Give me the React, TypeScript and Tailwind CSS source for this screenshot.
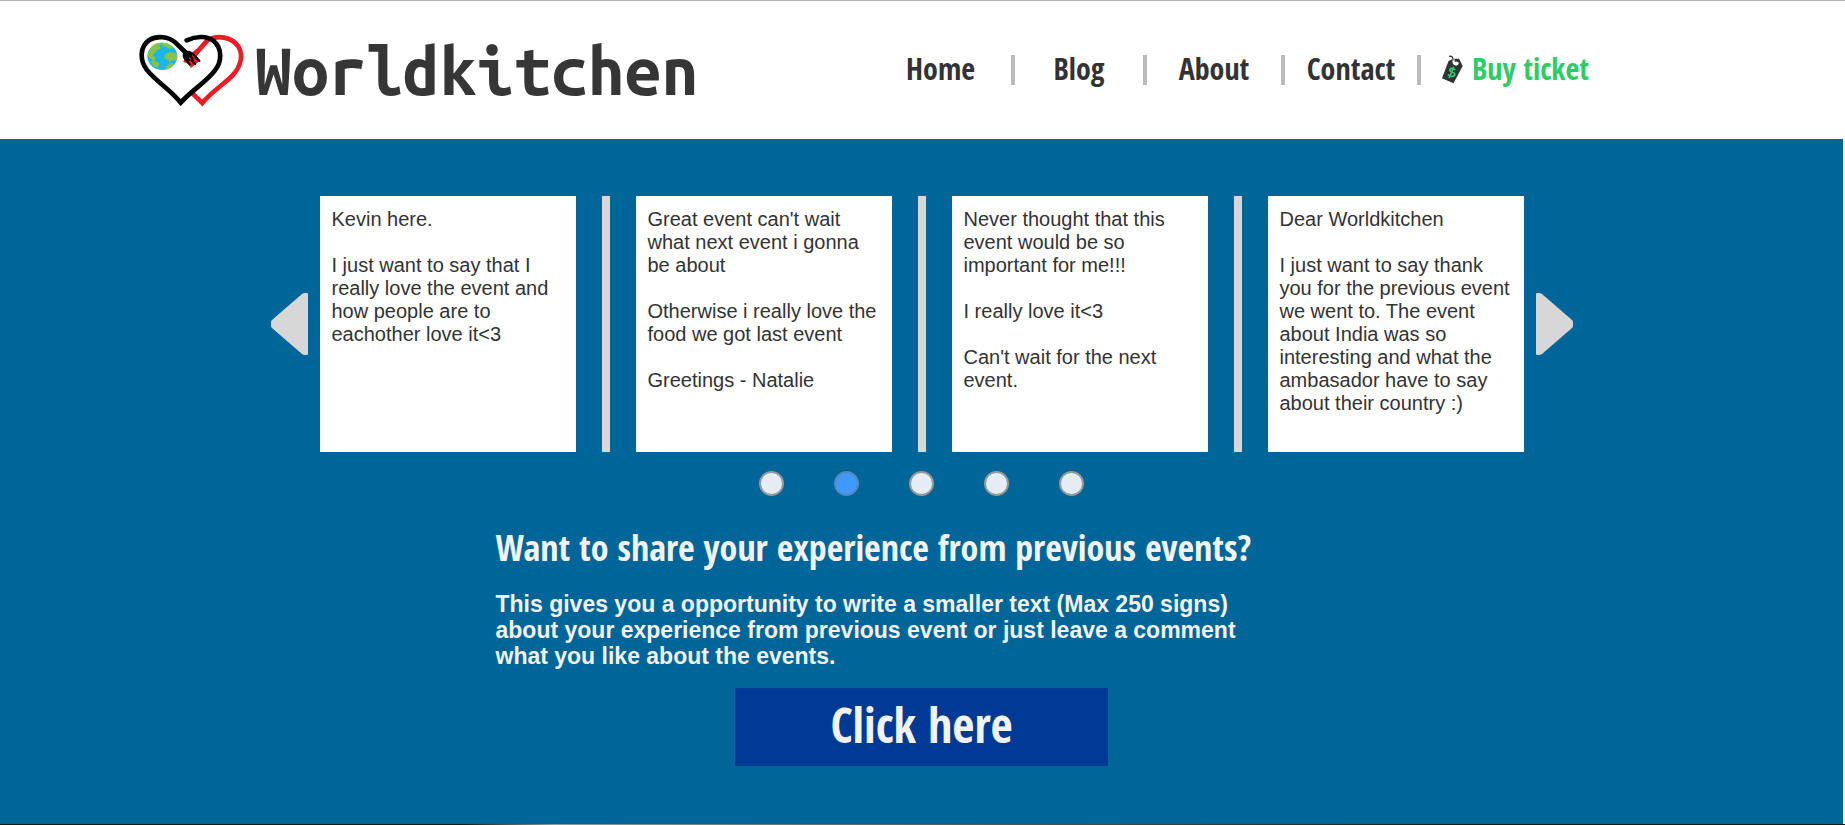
const cards = [
  ['Kevin here.', 'I just want to say that I really love the event and how people are to eachother love it<3'],
  ["Great event can't wait what next event i gonna be about", 'Otherwise i really love the food we got last event', 'Greetings - Natalie'],
  ['Never thought that this event would be so important for me!!!', 'I really love it<3', "Can't wait for the next event."],
  ['Dear Worldkitchen', 'I just want to say thank you for the previous event we went to. The event about India was so interesting and what the ambasador have to say about their country :)'],
];

const links = [
  { label: 'Home', width: 'w-[145px]' },
  { label: 'Blog', width: 'w-[132px]' },
  { label: 'About', width: 'w-[138px]' },
  { label: 'Contact', width: 'w-[136px]' },
];

function Logo() {
  return (
    <svg viewBox="57 102 315 219" className="h-[73px] w-[105px] shrink-0" fill="none" aria-hidden="true">
      <path d="M210 180 L262 121 C292 103 335 111 355 139 C372 167 361 201 337 227 C312 253 278 271 247 309 L218 281" stroke="#ed1c24" strokeWidth="14" />
      <path d="M200 121 C230 107 262 108 281 123 C307 145 306 185 285 211 C259 246 217 269 182 308 C151 268 108 245 80 209 C58 179 60 139 88 120 C111 106 145 110 164 126 C179 139 188 150 205 165" stroke="#050505" strokeWidth="14" strokeLinecap="round" />
      <ellipse cx="127" cy="169" rx="45" ry="41" fill="#1bb7eb" />
      <path d="M90 147 C98 133 109 129 119 129 L123 133 L117 138 L124 145 L114 148 L105 157 L98 164 L107 174 L101 184 L94 177 L84 170 C83 162 85 154 90 147Z M122 128 C138 127 152 133 160 143 L148 146 L138 140 L128 139Z M134 163 L149 156 L169 160 C173 168 172 176 169 182 L158 179 L152 186 L143 180 L133 175Z M98 181 L111 185 L118 193 L112 203 L101 197 L92 186Z M137 200 L153 188 L164 191 C157 201 147 207 137 209Z" fill="#89c540" />
      <path d="M229 146 L239 158 L229 169 L235 186 L213 204 L205 191 L189 185 L198 174Z" fill="#ed1c24" />
      <path d="M190 157 C201 148 216 153 223 162 L240 181 L235 185 L223 174 L219 177 L228 190 L223 194 L211 181 L207 184 L213 194 L208 197 L197 184 C190 177 185 168 190 157Z" fill="#050505" />
      <path d="M207 172 L213 179 M216 166 L223 174 M222 182 L227 188" stroke="#ed1c24" strokeWidth="4" />
      <path d="M228 170 L239 183 M217 181 L226 192" stroke="#050505" strokeWidth="5" strokeLinecap="round" />
    </svg>
  );
}

function TicketTag() {
  return (
    <svg viewBox="600 76 70 88" className="h-[29px] w-[23px] shrink-0" fill="none" aria-hidden="true">
      <path d="M623 94 L637 87 L655 87 L666 109 L638 162 L603 147Z" fill="#303436" />
      <circle cx="646" cy="102" r="6" fill="white" />
      <path d="M625 80 C637 78 638 86 638 95 C639 106 650 106 651 98" stroke="white" strokeWidth="7" />
      <path d="M625 80 C637 78 636 86 637 93" stroke="#303436" strokeWidth="4" />
      <path d="M643 122 C637 113 626 116 627 123 C628 130 642 127 642 135 C641 143 627 143 621 135 M639 112 L625 146" stroke="#2fcc66" strokeWidth="5" />
    </svg>
  );
}

function Arrow({ label, flip }: { label: string; flip?: boolean }) {
  return (
    <button type="button" aria-label={label} className={flip ? 'shrink-0 rotate-180' : 'shrink-0'}>
      <svg viewBox="0 0 37 62" className="h-[62px] w-[37px]" aria-hidden="true">
        <path d="M1 27 L31 1 Q32 0 34 0 H36 Q37 0 37 1 V61 Q37 62 36 62 H34 Q32 62 31 61 L1 35 Q0 34 0 33 V29 Q0 28 1 27Z" fill="#d7d7d7" />
      </svg>
    </button>
  );
}

export default function App() {
  return (
    <div className="bg-white font-['Liberation_Sans',Arial,sans-serif] text-[#333]">
      <header className="flex h-[139px] items-center border-t border-[#b3b3b3] pl-[139px]">
        <a href="#home" className="flex w-[731px] shrink-0 items-center gap-[11px]">
          <Logo />
          <span className="font-['Ubuntu_Mono','DejaVu_Sans_Mono',monospace] text-[66px] leading-[70px] font-bold text-[#363636]">Worldkitchen</span>
        </a>
        <nav aria-label="Main">
          <ul className="flex items-center font-['Open_Sans_Condensed','Open_Sans',sans-serif] text-[30px] leading-[28px] font-bold">
            {links.map((link) => (
              <li key={link.label} className={`${link.width} border-r-4 border-[#bbb] pb-0.5 text-center`}>
                <a href={`#${link.label.toLowerCase()}`}>{link.label}</a>
              </li>
            ))}
            <li className="pb-0.5 pl-5">
              <a href="#tickets" className="flex items-center gap-2 whitespace-nowrap text-[#2fcc66]">
                <TicketTag />
                Buy ticket
              </a>
            </li>
          </ul>
        </nav>
      </header>

      <main className="mr-0.5 bg-[#006699] pt-[57px] pb-[58px]">
        <section aria-label="Visitor comments">
          <div className="flex items-center justify-center gap-3">
            <Arrow label="Previous comments" />
            <ul className="flex">
              {cards.map((paragraphs, index) => (
                <li key={paragraphs[0]} className="flex">
                  {index > 0 && <span className="mx-[26px] w-2 bg-[#d7d7d7]" />}
                  <article className="flex size-64 flex-col gap-[23px] bg-white p-3 text-[20px] leading-[23px]">
                    {paragraphs.map((text) => (
                      <p key={text}>{text}</p>
                    ))}
                  </article>
                </li>
              ))}
            </ul>
            <Arrow label="Next comments" flip />
          </div>
          <div className="mt-[19px] flex justify-center gap-[50px]">
            {[1, 2, 3, 4, 5].map((page) => (
              <button
                key={page}
                type="button"
                aria-label={`Page ${page}`}
                className={`size-[25px] rounded-full border-2 ${page === 2 ? 'border-[#5588bb] bg-[#3f99ff]' : 'border-[#999] bg-[#e4edf4]'}`}
              />
            ))}
          </div>
        </section>

        <section className="mx-auto mt-7 flex w-[852px] flex-col text-[#f2f2f2]">
          <h2 className="font-['Open_Sans_Condensed','Open_Sans',sans-serif] text-[36px] leading-[48px] font-bold">Want to share your experience from previous events?</h2>
          <p className="mt-[19px] max-w-[768px] text-[23px] leading-[26px] font-bold">
            This gives you a opportunity to write a smaller text (Max 250 signs) about your experience from previous event or just leave a comment what you like about the events.
          </p>
          <button type="button" className="mt-[19px] h-[78px] w-[373px] self-center bg-[#003a96] pb-1 font-['Open_Sans_Condensed','Open_Sans',sans-serif] text-[48px] leading-[64px] font-bold">
            Click here
          </button>
        </section>
      </main>
      <div className="h-px bg-linear-to-r from-[#18190f] from-25% via-[#8b9a9c] via-30% to-[#18190f] to-80%" />
    </div>
  );
}
